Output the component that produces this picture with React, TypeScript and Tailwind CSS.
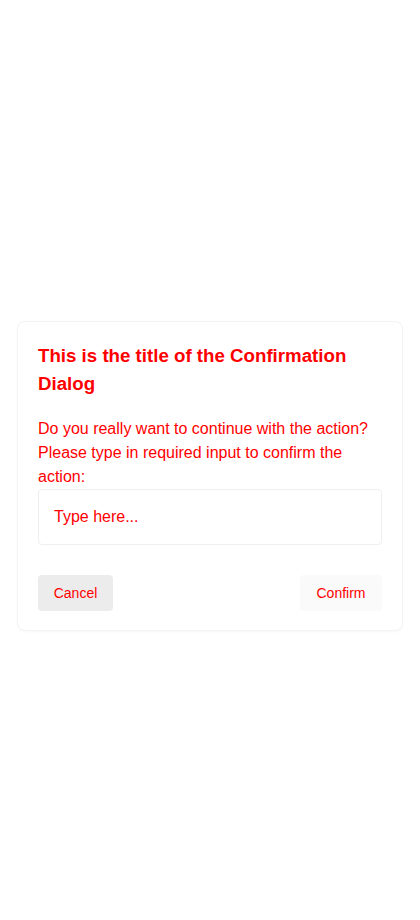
import { useState } from "react"

export default function App() {
  const [value, setValue] = useState("")

  return (
    <div className="flex min-h-[920px] w-full items-start justify-center bg-white px-[17px] pt-[321px] font-['Liberation_Sans',Arial,sans-serif]">
      <div className="w-full rounded-lg border border-[#f4f4f4] bg-white px-[20px] pb-[19px] pt-[20px] shadow-[0_1px_3px_rgba(0,0,0,0.03)]">
        <h2 className="text-[18.7px] font-bold leading-[28px] text-[#ff0000]">
          This is the title of the Confirmation Dialog
        </h2>

        <p className="mt-[19px] text-[16px] leading-[24px] text-[#ff0000]">
          Do you really want to continue with the action? Please type in required input to confirm the action:
        </p>

        <input
          value={value}
          onChange={(e) => setValue(e.target.value)}
          placeholder="Type here..."
          className="h-[56px] w-full rounded border border-[#efefef] bg-white px-[15px] text-[16px] text-[#ff0000] outline-none placeholder:text-[#ff0000]"
        />

        <div className="mt-[30px] flex items-center justify-between">
          <button className="h-[36px] w-[75px] rounded bg-[#ececec] text-[14px] text-[#ff0000]">
            Cancel
          </button>
          <button className="h-[36px] w-[82px] rounded bg-[#fafafa] text-[14px] text-[#ff0000]">
            Confirm
          </button>
        </div>
      </div>
    </div>
  )
}
